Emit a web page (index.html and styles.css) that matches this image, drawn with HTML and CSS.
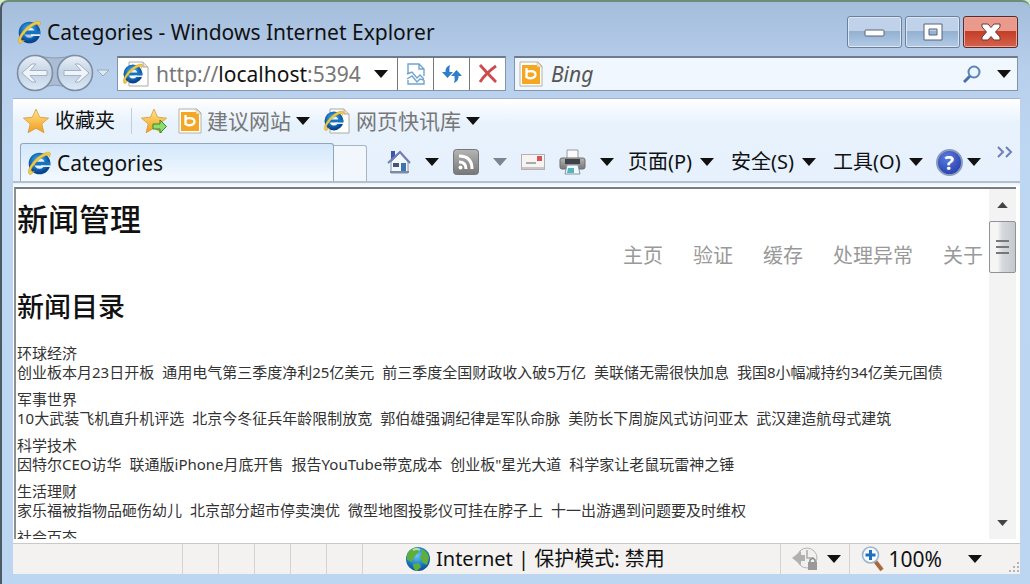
FILE: index.html
```html
<!DOCTYPE html>
<html lang="zh-CN">
<head>
    <meta charset="UTF-8">
    <meta name="viewport" content="width=device-width, initial-scale=1.0">
    <link rel="stylesheet" href="styles.css">
    <title>Categories</title>
</head>
<body>
    <!-- shared icons -->
    <svg class="sprite" aria-hidden="true">
        <defs>
            <radialGradient id="blue" cx="0.45" cy="0.35" r="0.7">
                <stop offset="0" stop-color="#6cc8f5"/>
                <stop offset="0.6" stop-color="#1a7ac6"/>
                <stop offset="1" stop-color="#0a4590"/>
            </radialGradient>
            <linearGradient id="gold" x1="0" y1="0" x2="0" y2="1">
                <stop offset="0" stop-color="#ffe88a"/>
                <stop offset="1" stop-color="#f29a1c"/>
            </linearGradient>
            <linearGradient id="gray" x1="0" y1="0" x2="0" y2="1">
                <stop offset="0" stop-color="#b5b5b5"/>
                <stop offset="1" stop-color="#777"/>
            </linearGradient>
            <linearGradient id="pale" x1="0" y1="0" x2="0" y2="1">
                <stop offset="0" stop-color="#eaf1f8"/>
                <stop offset="0.5" stop-color="#c2d2e3"/>
                <stop offset="1" stop-color="#dceaf7"/>
            </linearGradient>
        </defs>
        <symbol id="ie" viewBox="0 0 24 24">
            <circle cx="12.5" cy="12.5" r="8" fill="none" stroke="url(#blue)" stroke-width="5.6"/>
            <path d="M8 12.6h15.300" stroke="#1673bd" stroke-width="3.6"/>
            <path d="M14 15.2h9" stroke="#e4f1fb" stroke-width="1.8"/>
            <path d="M8.500 10c1.500-3 6.500-3 8 0z" fill="#dff0fb"/>
            <path d="M2.500 23.500c-3.800-3 2.500-12.500 8.500-17.500S23 0 23.500 2.500c.2 1.200-.6 2.500-1.500 4 .3-2.500-1.500-2.800-5-1C11 8.500 4.500 16 4 19.500c-.2 1.500 1.500 1.500 3.500.8-1.500 1.700-3.800 4-5 3.200z" fill="#edc94a" stroke="#c99a22" stroke-width=".4"/>
        </symbol>
        <symbol id="ie-page" viewBox="0 0 28 26">
            <path d="M7 1h14l5 5v19H7z" fill="#fff" stroke="#a9a9a9"/>
            <path d="M21 1v5h5" fill="#f4dfb3" stroke="#a9a9a9"/>
            <use href="#ie" x="0" y="2" width="21" height="21"/>
        </symbol>
        <symbol id="bing" viewBox="0 0 24 26">
            <path d="M1 1h18l4 4v20H1z" fill="#fff" stroke="#b8b1a0"/>
            <path d="M3 4h18v19H3z" fill="#f5a623"/>
            <path d="M7.500 7v10M7.500 12.200q0-2 4-2 5 0 5 3.400t-5 3.700q-4 0-4-2.300" fill="none" stroke="#fff" stroke-width="2.300"/>
            <path d="M18 1l5 5h-5z" fill="#f7e7c3" stroke="#c9b68a" stroke-width=".6"/>
        </symbol>
        <symbol id="star" viewBox="0 0 26 26">
            <path d="M13 1l3.600 8.200 9 .9-6.800 5.900 2.200 8.800-8-4.600-8 4.600 2.200-8.800L.4 10.100l9-.9z" fill="url(#gold)" stroke="#d9983a" stroke-width=".8"/>
        </symbol>
        <symbol id="caret" viewBox="0 0 14 8">
            <path d="M0 0h14L7 8z" fill="currentColor"/>
        </symbol>
    </svg>

    <div class="window">
        <header class="title-bar">
            <svg class="icon-24"><use href="#ie"/></svg>
            <span class="window-title">Categories - Windows Internet Explorer</span>
            <div class="window-buttons">
                <button class="window-button" aria-label="最小化">
                    <svg width="22" height="10" viewBox="0 0 22 10"><rect x="1" y="3" width="19" height="6" rx="1" fill="#fff" stroke="#56657a"/></svg>
                </button>
                <button class="window-button" aria-label="最大化">
                    <svg width="20" height="18" viewBox="0 0 20 18"><path d="M1 1h18v16H1zM6 6v6h8V6z" fill="#fff" fill-rule="evenodd" stroke="#56657a"/></svg>
                </button>
                <button class="window-button close-button" aria-label="关闭">
                    <svg width="20" height="18" viewBox="0 0 20 18"><path d="M1 1h6l3 3.500L13 1h6v3l-4.500 5L19 14v3h-6l-3-3.500L7 17H1v-3l4.500-5L1 4z" fill="#fff" stroke="#6d3b3b"/></svg>
                </button>
            </div>
        </header>

        <div class="nav-bar">
            <svg class="travel-buttons" viewBox="0 0 78 38">
                <path d="M20 1q19 6 38 0v36q-19-12-38 0z" fill="#a9bdd4" stroke="#8b9db3"/>
                <circle cx="19" cy="19" r="17.500" fill="url(#pale)" stroke="#7e8da1" stroke-width="1.600"/>
                <circle cx="59" cy="19" r="17.500" fill="url(#pale)" stroke="#7e8da1" stroke-width="1.600"/>
                <path d="M6 19l10-9h4l-6 6.500h17v5H14l6 6.500h-4z" fill="#eef4fa" stroke="#a3b2c4"/>
                <path d="M73 19l-10-9h-4l6 6.500H48v5h17l-6 6.500h4z" fill="#eef4fa" stroke="#a3b2c4"/>
            </svg>
            <svg class="history-caret" viewBox="0 0 14 8"><path d="M1 1h12L7 7z" fill="#dce8f5" stroke="#9aa9bc"/></svg>
            <div class="address-bar">
                <svg class="page-icon"><use href="#ie-page"/></svg>
                <span class="url">http://<b>localhost</b>:5394</span>
                <button class="plain-button" aria-label="地址列表"><svg class="caret"><use href="#caret"/></svg></button>
                <button class="address-button" aria-label="兼容性视图">
                    <svg width="20" height="24" viewBox="0 0 20 24" fill="none" stroke="#6fa4cf" stroke-width="1.400"><path d="M2 11V2h11l5 5v7M13 2v5h5M2 18v4h16v-4M1 12l5-2 5 6 3-3 4 4M1 17l5-3 5 6 3-3 4 1"/></svg>
                </button>
                <button class="address-button" aria-label="刷新">
                    <svg width="20" height="20" viewBox="0 0 20 20" fill="#2f7fc8"><path d="M8 1Q3 3 3.500 8H0l5.500 6L11 8H7.500Q7 4 8 1z"/><path d="M12 19q5-2 4.500-7H20l-5.500-6L9 12h3.500q.5 4-.5 7z"/></svg>
                </button>
                <button class="address-button" aria-label="停止">
                    <svg width="20" height="20" viewBox="0 0 20 20" fill="none" stroke="#cf4a4d" stroke-width="2.800"><path d="M2 1q7 8 16 17M18 2Q8 9 2 18"/></svg>
                </button>
            </div>
            <div class="search-bar">
                <svg class="bing-icon"><use href="#bing"/></svg>
                <input type="text" class="search-input" placeholder="Bing" aria-label="Bing">
                <button class="plain-button" aria-label="搜索">
                    <svg width="18" height="18" viewBox="0 0 18 18" fill="none"><path d="M8 10l-7 7" stroke="#4d6fa8" stroke-width="3"/><circle cx="11" cy="7" r="5.500" fill="#eaf6ff" stroke="#5b83b8" stroke-width="2"/></svg>
                </button>
                <button class="plain-button" aria-label="搜索选项"><svg class="caret"><use href="#caret"/></svg></button>
            </div>
        </div>

        <div class="panel">
            <div class="favorites-bar">
                <button class="favorites-button">
                    <svg class="icon-26"><use href="#star"/></svg>
                    收藏夹
                </button>
                <button class="add-button" aria-label="添加到收藏夹">
                    <svg class="icon-26" viewBox="0 0 26 26"><use href="#star" width="26" height="26"/><path d="M12 16h7v-4l6.500 6.500L19 25v-4h-7z" fill="#8fdc6c" stroke="#2f8a2a"/></svg>
                </button>
                <button class="link-button">
                    <svg class="bing-icon"><use href="#bing"/></svg>
                    建议网站
                    <svg class="caret"><use href="#caret"/></svg>
                </button>
                <button class="link-button">
                    <svg class="page-icon"><use href="#ie-page"/></svg>
                    网页快讯库
                    <svg class="caret"><use href="#caret"/></svg>
                </button>
            </div>

            <div class="tab-row">
                <button class="tab">
                    <svg class="icon-24"><use href="#ie"/></svg>
                    Categories
                </button>
                <button class="new-tab" aria-label="新选项卡"></button>
                <div class="command-bar">
                    <button class="plain-button" aria-label="主页">
                        <svg width="24" height="24" viewBox="0 0 24 24"><path d="M4 1h4v8H4z" fill="#3d55ad"/><path d="M4 12l9-9 8 9v11H4z" fill="#f3f6fc" stroke="#8490ad"/><path d="M1 13L13 2l10 11" fill="none" stroke="#6f80b3" stroke-width="2"/><path d="M6 13h6v4H6z" fill="#44547a"/><path d="M14 13h5v10h-5z" fill="#3f73b0"/><path d="M3 22h19" stroke="#7c8aa5" stroke-width="2"/></svg>
                    </button>
                    <button class="plain-button" aria-label="主页菜单"><svg class="caret"><use href="#caret"/></svg></button>
                    <button class="plain-button" aria-label="源">
                        <svg width="26" height="26" viewBox="0 0 26 26"><rect x=".5" y=".5" width="25" height="25" rx="3" fill="url(#gray)" stroke="#777"/><g fill="none" stroke="#fff" stroke-width="3"><path d="M6 13q7 0 7 7M6 7q13 0 13 13"/></g><circle cx="7.500" cy="18.500" r="2" fill="#fff"/></svg>
                    </button>
                    <button class="plain-button disabled" aria-label="源菜单"><svg class="caret"><use href="#caret"/></svg></button>
                    <button class="plain-button" aria-label="阅读邮件">
                        <svg width="24" height="16" viewBox="0 0 24 16"><rect x=".5" y=".5" width="23" height="15" fill="#f6f4f2" stroke="#b5b0ad"/><path d="M1 14h22" stroke="#c9c5c2" stroke-width="2"/><path d="M16 2h5v5h-5z" fill="#d4545b"/><path d="M5 9h10" stroke="#aaa" stroke-width="2"/></svg>
                    </button>
                    <button class="plain-button" aria-label="打印">
                        <svg width="27" height="26" viewBox="0 0 27 26"><path d="M8 1h11v10H8z" fill="#fafafa" stroke="#9a9a9a"/><rect x="1" y="9" width="25" height="11" rx="2" fill="url(#gray)" stroke="#6d6d6d"/><path d="M6 10h15v5H6z" fill="#3e4248"/><path d="M8 16h11l2 9H6z" fill="#f1fafc" stroke="#87939a"/><path d="M9 19h6v5H8z" fill="#56b3c5"/></svg>
                    </button>
                    <button class="plain-button" aria-label="打印菜单"><svg class="caret"><use href="#caret"/></svg></button>
                    <button class="menu-button">页面(P) <svg class="caret"><use href="#caret"/></svg></button>
                    <button class="menu-button">安全(S) <svg class="caret"><use href="#caret"/></svg></button>
                    <button class="menu-button">工具(O) <svg class="caret"><use href="#caret"/></svg></button>
                    <button class="help-button" aria-label="帮助">
                        <span class="help-mark">?</span>
                        <svg class="caret"><use href="#caret"/></svg>
                    </button>
                    <button class="plain-button more-button" aria-label="更多">
                        <svg width="16" height="12" viewBox="0 0 16 12" fill="none" stroke="#6f7fb5" stroke-width="2"><path d="M1 1l5 5-5 5M9 1l5 5-5 5"/></svg>
                    </button>
                </div>
            </div>

            <div class="viewport">
                <main class="page">
                    <h1>新闻管理</h1>
                    <nav class="page-menu">
                        <a href="#">主页</a>
                        <a href="#">验证</a>
                        <a href="#">缓存</a>
                        <a href="#">处理异常</a>
                        <a href="#">关于</a>
                    </nav>
                    <h2>新闻目录</h2>
                    <section class="category">
                        <h3>环球经济</h3>
                        <ul>
                            <li>创业板本月23日开板</li>
                            <li>通用电气第三季度净利25亿美元</li>
                            <li>前三季度全国财政收入破5万亿</li>
                            <li>美联储无需很快加息</li>
                            <li>我国8小幅减持约34亿美元国债</li>
                        </ul>
                    </section>
                    <section class="category">
                        <h3>军事世界</h3>
                        <ul>
                            <li>10大武装飞机直升机评选</li>
                            <li>北京今冬征兵年龄限制放宽</li>
                            <li>郭伯雄强调纪律是军队命脉</li>
                            <li>美防长下周旋风式访问亚太</li>
                            <li>武汉建造航母式建筑</li>
                        </ul>
                    </section>
                    <section class="category">
                        <h3>科学技术</h3>
                        <ul>
                            <li>因特尔CEO访华</li>
                            <li>联通版iPhone月底开售</li>
                            <li>报告YouTube带宽成本</li>
                            <li>创业板"星光大道</li>
                            <li>科学家让老鼠玩雷神之锤</li>
                        </ul>
                    </section>
                    <section class="category">
                        <h3>生活理财</h3>
                        <ul>
                            <li>家乐福被指物品砸伤幼儿</li>
                            <li>北京部分超市停卖澳优</li>
                            <li>微型地图投影仪可挂在脖子上</li>
                            <li>十一出游遇到问题要及时维权</li>
                        </ul>
                    </section>
                    <section class="category">
                        <h3>社会百态</h3>
                    </section>
                </main>
                <div class="scrollbar">
                    <button class="scroll-button" aria-label="向上滚动"><svg class="scroll-arrow up"><use href="#caret"/></svg></button>
                    <div class="scroll-thumb"><i></i><i></i><i></i></div>
                    <button class="scroll-button scroll-down" aria-label="向下滚动"><svg class="scroll-arrow"><use href="#caret"/></svg></button>
                </div>
            </div>

            <footer class="status-bar">
                <div class="status-cells"><i></i><i></i><i></i><i></i><i></i><i></i></div>
                <div class="zone">
                    <svg class="icon-26" viewBox="0 0 26 26"><circle cx="13" cy="13" r="12" fill="url(#blue)"/><path d="M4 5q6-5 9-3l1 4-5 5-2 5-5-2q-1-5 2-9zM16 3q7 2 8 9l-2 7-4-2-3-6 2-3zM8 18l6-1 2 4-4 4q-4-1-4-7z" fill="#5fae3c"/><path d="M8 4q4-2 7 0" stroke="#fff" stroke-width="2" fill="none" opacity=".6"/></svg>
                    <span>Internet | 保护模式: 禁用</span>
                </div>
                <button class="status-button" aria-label="隐私">
                    <svg width="26" height="24" viewBox="0 0 26 24"><circle cx="15" cy="11" r="10" fill="#f0f0f0" stroke="#b5b5b5"/><path d="M15 3v8h7" stroke="#aaa" fill="none" stroke-width="1.500"/><path d="M0 11l9-7v4h4v6H9v4z" fill="#b0b0b0"/><path d="M18 15v-2q3-3 5 0v2" stroke="#888" fill="none" stroke-width="1.500"/><path d="M16 15h9v8h-9z" fill="#999"/></svg>
                    <svg class="caret"><use href="#caret"/></svg>
                </button>
                <button class="status-button zoom-button">
                    <svg width="24" height="26" viewBox="0 0 24 26"><path d="M14 15l7 9" stroke="#a8693f" stroke-width="4"/><circle cx="9.500" cy="9" r="8" fill="#f4faff" stroke="#9db4c9" stroke-width="1.600"/><path d="M4.500 9h10M9.500 4v10" stroke="#1f6fbd" stroke-width="3"/></svg>
                    <span>100%</span>
                    <svg class="caret"><use href="#caret"/></svg>
                </button>
                <svg class="grip" viewBox="0 0 12 12" fill="#b5b5b5"><path d="M9 0h2v2H9zM9 4h2v2H9zM9 8h2v2H9zM5 4h2v2H5zM5 8h2v2H5zM1 8h2v2H1z"/></svg>
            </footer>
        </div>
    </div>
</body>
</html>
```
FILE: styles.css
```css
* {
    box-sizing: border-box;
}

body {
    margin: 0;
    background-color: #d5ecc8;
    color: #111;
    font-family: "Noto Sans", "Noto Sans CJK SC", sans-serif;
    font-size: 20px;
    line-height: 26px;
}

button {
    display: flex;
    align-items: center;
    padding: 0;
    border: none;
    background: none;
    color: inherit;
    font: inherit;
    white-space: nowrap;
    cursor: pointer;
}

svg {
    display: block;
    flex: none;
}

.sprite {
    position: absolute;
    width: 0;
    height: 0;
}

.icon-24 {
    width: 24px;
    height: 24px;
}

.icon-26 {
    width: 26px;
    height: 26px;
}

.page-icon {
    width: 28px;
    height: 26px;
}

.bing-icon {
    width: 24px;
    height: 26px;
}

.caret {
    width: 14px;
    height: 8px;
}

.window {
    display: flex;
    flex-direction: column;
    height: 100vh;
    padding: 0 10px 10px 11px;
    border-top: 2px solid #6d8d76;
    border-left: 2px solid #4c5a66;
    border-radius: 8px 8px 0 0;
    background: linear-gradient(#a3bddb 0, #b9d0ec 70px, #bdd6f1 150px, #bcd5f0);
    overflow: hidden;
}

/* title */
.title-bar {
    display: flex;
    align-items: center;
    flex: none;
    height: 52px;
    padding: 8px 2px 0 4px;
}

.window-title {
    flex: 1;
    margin-left: 6px;
    font-size: 21px;
}

.window-buttons {
    display: flex;
    gap: 3px;
}

.window-button {
    justify-content: center;
    width: 55px;
    height: 32px;
    border: 1px solid #6d7f99;
    border-radius: 3px;
    box-shadow: inset 0 0 0 1px #dbe7f5;
    background: linear-gradient(#bfd2e9 45%, #93b0d1 46%, #b2cae6);
}

.close-button {
    border-color: #5c2a2a;
    box-shadow: inset 0 0 0 1px #eba79c;
    background: linear-gradient(#e99a8c 45%, #c43c27 46%, #d4634b);
}

/* address and search */
.nav-bar {
    display: flex;
    align-items: center;
    flex: none;
    height: 38px;
    margin-bottom: 6px;
    padding: 0 2px 0 3px;
}

.travel-buttons {
    width: 78px;
    height: 38px;
}

.history-caret {
    width: 14px;
    height: 8px;
    margin: 0 7px 0 2px;
}

.address-bar,
.search-bar {
    display: flex;
    align-items: center;
    height: 35px;
    border: 1px solid #8295ae;
    border-top: 2px solid #6f7b8c;
    background-color: #fff;
}

.address-bar {
    flex: none;
    width: 389px;
    padding-left: 4px;
    margin-right: 8px;
}

.url {
    flex: 1;
    margin-left: 6px;
    color: #777;
    font-size: 21px;
}

.url b {
    color: #111;
    font-weight: normal;
}

.address-button {
    justify-content: center;
    width: 36px;
    height: 100%;
    border-left: 1px solid #777;
}

.address-bar .plain-button {
    margin-right: 9px;
}

.search-bar {
    flex: 1;
    padding: 0 6px 0 4px;
    background-color: #f1f7fe;
}

.search-input {
    flex: 1;
    min-width: 0;
    margin-left: 8px;
    padding: 0;
    border: none;
    outline: none;
    background: none;
    font: italic 21px "Noto Sans", sans-serif;
}

.search-input::placeholder {
    color: #555;
    opacity: 1;
}

.search-bar .plain-button + .plain-button {
    margin-left: 16px;
}

/* toolbars */
.panel {
    display: flex;
    flex-direction: column;
    flex: 1;
    min-height: 0;
    border-top: 1px solid #9fb3cc;
    background: linear-gradient(#fff 0, #e8f2fd 24px, #e6f1fd 84px, #fff 88px);
}

.favorites-bar {
    display: flex;
    align-items: center;
    flex: none;
    height: 44px;
    padding-left: 10px;
}

.favorites-button {
    gap: 6px;
    padding-right: 16px;
    border-right: 1px solid #c3cedb;
}

.add-button {
    margin: 0 11px 0 9px;
}

.link-button {
    gap: 5px;
    margin-right: 13px;
    color: #777;
    font-size: 21px;
}

.link-button .caret {
    color: #111;
}

.tab-row {
    display: flex;
    flex: none;
    height: 40px;
    margin-bottom: 4px;
    padding-left: 7px;
    border-bottom: 2px solid #b4c0cc;
}

.tab {
    gap: 6px;
    width: 314px;
    padding-left: 6px;
    border: 1px solid #93a5bc;
    border-bottom: none;
    border-radius: 3px 3px 0 0;
    background: linear-gradient(#d3e7fb, #f5faff);
    font-size: 21px;
}

.new-tab {
    width: 33px;
    margin-top: 2px;
    border: 1px solid #a9b4c1;
    border-left: none;
    border-bottom: none;
    border-radius: 0 3px 0 0;
    background-color: #f1f7fd;
}

.command-bar {
    display: flex;
    align-items: center;
    flex: 1;
    gap: 14px;
    padding-left: 20px;
}

.disabled {
    color: #7d8590;
}

.menu-button {
    gap: 8px;
    margin-right: 3px;
}

.help-button {
    gap: 4px;
    margin-left: -4px;
}

.help-mark {
    width: 27px;
    height: 27px;
    border: 2px solid #8b9bc0;
    border-radius: 50%;
    background: radial-gradient(circle at 40% 30%, #5b7be0, #1c35a0);
    color: #fff;
    font-weight: bold;
    line-height: 23px;
    text-align: center;
}

.more-button {
    margin: 0 7px 20px auto;
}

/* web page */
.viewport {
    display: flex;
    flex: 1;
    min-height: 0;
    margin: 0 4px 4px 1px;
    border-top: 2px solid #777c80;
    border-left: 2px solid #8b9094;
    background-color: #fff;
}

.page {
    flex: 1;
    min-width: 0;
    overflow: hidden;
    padding-left: 1px;
    color: #333;
    font-size: 15px;
    line-height: 19px;
}

.page h1,
.page h2 {
    margin: 0;
    color: #111;
    font-weight: 500;
}

.page h1 {
    padding-top: 10px;
    font-size: 31px;
    line-height: 40px;
}

.page-menu {
    display: flex;
    justify-content: flex-end;
    gap: 30px;
    padding: 4px 6px 0 0;
    line-height: 26px;
}

.page-menu a {
    color: #999;
    font-size: 20px;
    text-decoration: none;
}

.page h2 {
    margin: 20px 0 19px;
    font-size: 27px;
    line-height: 36px;
}

.category {
    margin-bottom: 8px;
}

.category h3 {
    margin: 0;
    font-size: 15px;
    font-weight: normal;
}

.category ul {
    display: flex;
    gap: 8px;
    margin: 0;
    padding: 0;
    list-style: none;
    white-space: nowrap;
}

.scrollbar {
    display: flex;
    flex-direction: column;
    flex: none;
    width: 27px;
    background-color: #f3f3f3;
}

.scroll-button {
    justify-content: center;
    height: 32px;
    color: #444;
}

.scroll-down {
    margin-top: auto;
}

.scroll-arrow {
    width: 11px;
    height: 6px;
}

.up {
    transform: rotate(180deg);
}

.scroll-thumb {
    display: flex;
    flex-direction: column;
    align-items: center;
    justify-content: center;
    gap: 4px;
    height: 52px;
    border: 1px solid #8f9296;
    border-radius: 2px;
    background: linear-gradient(90deg, #f5f5f5 30%, #d5d8dc 50%, #c5c8cc);
}

.scroll-thumb i {
    width: 13px;
    height: 2px;
    background-color: #777;
}

/* status */
.status-bar {
    display: flex;
    align-items: center;
    flex: none;
    height: 31px;
    border-top: 1px solid #c9c9c9;
    background-color: #f4f2f1;
    font-size: 21px;
}

.status-cells {
    display: flex;
    align-self: stretch;
    padding-left: 134px;
}

.status-cells i {
    width: 36px;
    border-right: 1px solid #d5d2d0;
}

.zone {
    display: flex;
    align-items: center;
    flex: 1;
    gap: 5px;
    margin-left: 42px;
    font-size: 20px;
}

.status-button {
    gap: 9px;
    height: 100%;
    padding: 0 8px 0 11px;
    border-left: 1px solid #d5d2d0;
}

.zoom-button {
    gap: 4px;
}

.zoom-button .caret {
    margin-left: 22px;
}

.grip {
    align-self: flex-end;
    width: 12px;
    height: 12px;
    margin-left: 18px;
}
```
